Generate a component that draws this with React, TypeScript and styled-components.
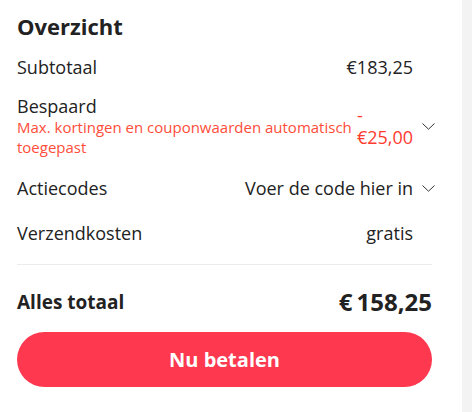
import React from "react";
import styled, { createGlobalStyle } from "styled-components";

const GlobalStyle = createGlobalStyle`
  html, body {
    margin: 0;
    padding: 0;
    background: #ffffff;
    font-family: "Open Sans", "Noto Sans", Arial, sans-serif;
    color: #222222;
    -webkit-font-smoothing: antialiased;
  }
  #root { width: 472px; height: 412px; overflow: hidden; }
`;

const Page = styled.div`
  display: flex;
  width: 472px;
  height: 412px;
  overflow: hidden;
`;

const Panel = styled.section`
  width: 462px;
  box-sizing: border-box;
  padding: 11px 30px 0 17px;
  background: #ffffff;
  display: flex;
  flex-direction: column;
`;

const Strip = styled.div`
  flex: 1;
  background: #f3f3f3;
`;

const Title = styled.h2`
  margin: 0;
  font-size: 22px;
  line-height: 30px;
  font-weight: 700;
  color: #222222;
`;

const Row = styled.div<{ $top: number }>`
  display: flex;
  align-items: center;
  margin-top: ${(p) => p.$top}px;
  margin-right: -3px;
`;

const LabelBlock = styled.div`
  flex: 1;
  min-width: 0;
  display: flex;
  flex-direction: column;
`;

const Label = styled.span`
  font-size: 18px;
  line-height: 22px;
  color: #222222;
`;

const Note = styled.span`
  font-size: 15px;
  line-height: 20px;
  color: #ff4d3a;
`;

const Value = styled.span<{ $tone?: "red" }>`
  font-size: 18px;
  line-height: 22px;
  color: ${(p) => (p.$tone === "red" ? "#ff3b2f" : "#222222")};
  font-weight: ${(p) => (p.$tone === "red" ? 500 : 400)};
  width: ${(p) => (p.$tone === "red" ? "min-content" : "auto")};
  white-space: ${(p) => (p.$tone === "red" ? "normal" : "nowrap")};
`;

const ArrowSlot = styled.span`
  width: 22px;
  flex: none;
  display: flex;
  justify-content: flex-end;
  align-items: center;
`;

const Divider = styled.hr`
  border: 0;
  border-top: 1px solid #ececec;
  margin: 20px 0 0 0;
  width: 415px;
`;

const TotalRow = styled.div`
  display: flex;
  align-items: center;
  justify-content: space-between;
  margin-top: 21px;
  width: 415px;
`;

const TotalLabel = styled.span`
  font-size: 19px;
  line-height: 24px;
  font-weight: 700;
  color: #222222;
`;

const TotalValue = styled.span`
  font-size: 24px;
  line-height: 32px;
  font-weight: 700;
  color: #222222;
`;

const PayButton = styled.button`
  margin-top: 14px;
  width: 415px;
  height: 55px;
  flex: none;
  border: 0;
  border-radius: 28px;
  background: #fd384f;
  color: #ffffff;
  font-family: "Open Sans", "Noto Sans", Arial, sans-serif;
  font-size: 20px;
  font-weight: 700;
  cursor: pointer;
`;

const Fine = styled.p`
  margin: 22px 0 0 0;
  width: 415px;
  text-align: center;
  font-size: 14px;
  line-height: 20px;
  color: #999999;
`;

const Chevron = () => (
  <svg width="13" height="7" viewBox="0 0 13 7" fill="none">
    <path d="M0.5 0.5 L6.5 6.2 L12.5 0.5" stroke="#333" strokeWidth="1" />
  </svg>
);

export default function App() {
  return (
    <>
      <GlobalStyle />
      <Page>
        <Panel>
          <Title>Overzicht</Title>

          <Row $top={15}>
            <LabelBlock>
              <Label>Subtotaal</Label>
            </LabelBlock>
            <Value>€183,25</Value>
            <ArrowSlot />
          </Row>

          <Row $top={17}>
            <LabelBlock>
              <Label>Bespaard</Label>
              <Note>Max. kortingen en couponwaarden automatisch toegepast</Note>
            </LabelBlock>
            <Value $tone="red">-€25,00</Value>
            <ArrowSlot>
              <Chevron />
            </ArrowSlot>
          </Row>

          <Row $top={20}>
            <LabelBlock>
              <Label>Actiecodes</Label>
            </LabelBlock>
            <Value>Voer de code hier in</Value>
            <ArrowSlot>
              <Chevron />
            </ArrowSlot>
          </Row>

          <Row $top={23}>
            <LabelBlock>
              <Label>Verzendkosten</Label>
            </LabelBlock>
            <Value>gratis</Value>
            <ArrowSlot />
          </Row>

          <Divider />

          <TotalRow>
            <TotalLabel>Alles totaal</TotalLabel>
            <TotalValue>€{"\u2009"}158,25</TotalValue>
          </TotalRow>

          <PayButton>Nu betalen</PayButton>

          <Fine>Door op 'Nu betalen' te klikken, ga je akkoord met de voorwaarden</Fine>
        </Panel>
        <Strip />
      </Page>
    </>
  );
}
